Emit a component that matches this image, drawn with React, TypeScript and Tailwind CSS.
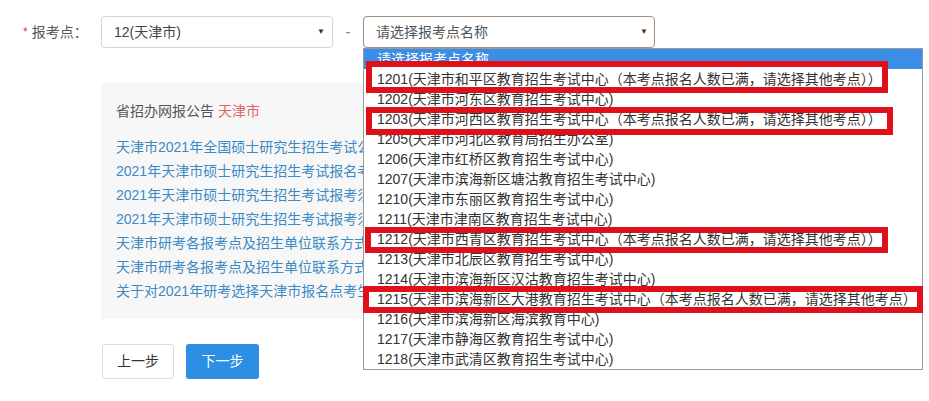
import React from "react";

type Opt = { t: string; box?: { top: number; left: number; w: number; h: number } };

const options: Opt[] = [
  { t: "1201(天津市和平区教育招生考试中心（本考点报名人数已满，请选择其他考点））", box: { top: -8, left: 2, w: 522, h: 32 } },
  { t: "1202(天津市河东区教育招生考试中心)" },
  { t: "1203(天津市河西区教育招生考试中心（本考点报名人数已满，请选择其他考点））", box: { top: -2, left: 2, w: 527, h: 28 } },
  { t: "1205(天津市河北区教育局招生办公室)" },
  { t: "1206(天津市红桥区教育招生考试中心)" },
  { t: "1207(天津市滨海新区塘沽教育招生考试中心)" },
  { t: "1210(天津市东丽区教育招生考试中心)" },
  { t: "1211(天津市津南区教育招生考试中心)" },
  { t: "1212(天津市西青区教育招生考试中心（本考点报名人数已满，请选择其他考点））", box: { top: -2, left: 1, w: 523, h: 26 } },
  { t: "1213(天津市北辰区教育招生考试中心)" },
  { t: "1214(天津市滨海新区汉沽教育招生考试中心)" },
  { t: "1215(天津市滨海新区大港教育招生考试中心（本考点报名人数已满，请选择其他考点）", box: { top: -3, left: -1, w: 560, h: 27 } },
  { t: "1216(天津市滨海新区海滨教育中心)" },
  { t: "1217(天津市静海区教育招生考试中心)" },
  { t: "1218(天津市武清区教育招生考试中心)" },
];

const links = [
  "天津市2021年全国硕士研究生招生考试公告",
  "2021年天津市硕士研究生招生考试报名考生须知",
  "2021年天津市硕士研究生招生考试报考须知",
  "2021年天津市硕士研究生招生考试报考须知（二）",
  "天津市研考各报考点及招生单位联系方式",
  "天津市研考各报考点及招生单位联系方式（二）",
  "关于对2021年研考选择天津市报名点考生的提示",
];

export default function App() {
  return (
    <div className="relative w-[929px] h-[401px] overflow-hidden bg-white font-['Liberation_Sans','Noto_Sans_CJK_SC',sans-serif] text-[14px] text-[#555]">
      {/* row 1 */}
      <div className="flex items-center pt-[16px]">
        <div className="w-[101px] pl-[23px] flex items-center leading-[20px]">
          <span className="text-[#e4393c] text-[12px] mr-[4px]">*</span>
          <span>报考点：</span>
        </div>
        <div className="w-[232px] h-[32px] border border-[#d4d4d4] rounded-[4px] flex items-center justify-between pl-[12px] pr-[7px] text-[#444]">
          <span>12(天津市)</span>
          <span className="text-[8px] text-[#333]">▼</span>
        </div>
        <div className="w-[30px] text-center text-[#777]">-</div>
        <div className="w-[292px] h-[32px] border border-[#a58a78] rounded-[4px] flex items-center justify-between pl-[12px] pr-[6px] text-[#555]">
          <span>请选择报考点名称</span>
          <span className="text-[8px] text-[#333]">▼</span>
        </div>
      </div>

      {/* notice panel */}
      <div className="ml-[101px] mt-[35px] w-[560px] h-[236px] bg-[#f7f7f8] px-[15px] pt-[18px] overflow-hidden">
        <div className="leading-[20px] text-[#555]">
          省招办网报公告 <span className="text-[#e06560]">天津市</span>
        </div>
        <div className="mt-[14px] flex flex-col">
          {links.map((l, i) => (
            <div key={i} className="leading-[24px] whitespace-nowrap text-[#3b8ac4]">
              {l}
            </div>
          ))}
        </div>
      </div>

      {/* buttons */}
      <div className="flex gap-[12px] ml-[102px] mt-[25px]">
        <button className="w-[72px] h-[35px] border border-[#dcdcdc] rounded-[3px] bg-white text-[#333] text-[14px]">
          上一步
        </button>
        <button className="w-[73px] h-[35px] rounded-[3px] bg-[#2c8fe4] text-white text-[14px]">
          下一步
        </button>
      </div>

      {/* dropdown list */}
      <div className="absolute left-[363px] top-[48px] w-[560px] border border-[#9a9a9a] bg-white">
        <div className="h-[20px] leading-[20px] pl-[13px] bg-[#3a8ee6] text-white whitespace-nowrap">
          请选择报考点名称
        </div>
        {options.map((o, i) => (
          <div key={i} className="relative h-[20px] leading-[20px] pl-[13px] text-[#333] whitespace-nowrap">
            {o.box && (
              <div
                className="absolute z-10 border-[6px] border-[#e0101a] bg-white"
                style={{ top: o.box.top, left: o.box.left, width: o.box.w, height: o.box.h }}
              />
            )}
            <span className={o.box ? "relative z-20" : ""}>{o.t}</span>
          </div>
        ))}
      </div>
    </div>
  );
}
